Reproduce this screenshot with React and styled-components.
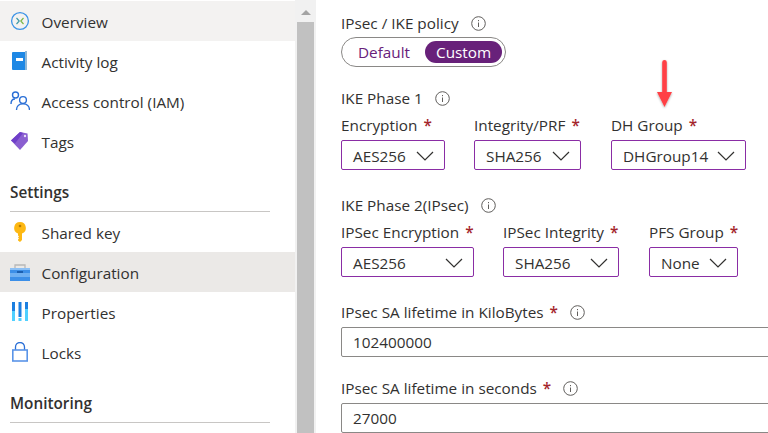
import React from 'react';
import styled, { createGlobalStyle } from 'styled-components';

const GlobalStyle = createGlobalStyle`
  html, body {
    margin: 0;
    padding: 0;
    background: #fff;
    overflow: hidden;
  }
  body {
    font-family: "Open Sans", "Noto Sans", sans-serif;
    color: #323130;
  }
`;

const OverviewIcon = () => (
  <svg width="20" height="20" viewBox="0 0 20 20" fill="none">
    <circle cx="10" cy="10" r="8.4" stroke="#3b93e6" strokeWidth="1.3" />
    <path d="M6.500 7 9.200 10 6.500 13" stroke="#3f9ba8" strokeWidth="1.2" />
    <path d="M13.500 7 10.800 10 13.500 13" stroke="#7ab648" strokeWidth="1.2" />
  </svg>
);

const LogIcon = () => (
  <svg width="16" height="20" viewBox="0 0 16 20">
    <rect x="0" y="1" width="15" height="18" rx="1" fill="#1e88e5" />
    <rect x="13" y="0" width="2" height="19" fill="#8fb8d8" />
    <rect x="4" y="7" width="7" height="3" fill="#fff" />
  </svg>
);

const AccessIcon = () => (
  <svg width="20" height="20" viewBox="0 0 20 20" fill="none" stroke="#2a6fd6" strokeWidth="1.4">
    <circle cx="5.500" cy="4" r="3" />
    <circle cx="13" cy="9" r="3.400" />
    <path d="M1 13c0-3 1.500-5 4-5" />
    <path d="M6.500 19c0-3.600 2.600-6.200 6.500-6.200s6.500 2.600 6.500 6.200" />
  </svg>
);

const TagIcon = () => (
  <svg width="18" height="20" viewBox="0 0 18 20">
    <path d="M0 9.500 9 1l7.500 1.500L17 10l-8 9z" fill="#8a5fd0" />
    <path d="M0 9.500 9 1l3 1-8 10.500z" fill="#6f3fc9" />
    <circle cx="14" cy="5" r="1.200" fill="#e8dff7" />
  </svg>
);

const KeyIcon = () => (
  <svg width="14" height="20" viewBox="0 0 14 20">
    <path d="M7 0a6 6 0 0 1 2 11.600V18l-2 2-2-1.500v-1l1-1-1-1 1-1-1-1v-1.900A6 6 0 0 1 7 0z" fill="#fdb813" />
    <circle cx="7" cy="4" r="1.300" fill="#b87b00" />
  </svg>
);

const ConfigIcon = () => (
  <svg width="20" height="17" viewBox="0 0 20 17">
    <path d="M5 4V1h10v3" fill="none" stroke="#b8b8b8" strokeWidth="1.300" />
    <rect x="0" y="4" width="20" height="13" fill="#3c8fe8" />
    <rect x="0" y="4" width="20" height="2" fill="#8cc0f5" />
    <rect x="0" y="9" width="20" height="4" fill="#6fb0f2" />
    <rect x="7" y="7" width="6" height="2" fill="#1b5fb0" />
  </svg>
);

const PropertiesIcon = () => (
  <svg width="16" height="20" viewBox="0 0 16 20">
    <rect x="0" y="0" width="3" height="9" fill="#1c7fe0" />
    <rect x="0" y="9" width="3" height="10" fill="#50d0ff" />
    <rect x="6.500" y="0" width="3" height="15" fill="#1c7fe0" />
    <rect x="6.500" y="16" width="3" height="3" fill="#50d0ff" />
    <rect x="13" y="0" width="3" height="7" fill="#1c7fe0" />
    <rect x="13" y="7" width="3" height="12" fill="#50d0ff" />
  </svg>
);

const LockIcon = () => (
  <svg width="16" height="20" viewBox="0 0 16 20" fill="none">
    <path d="M3.500 8V5a4.500 4.500 0 0 1 9 0v3" stroke="#2a6fd6" strokeWidth="1.300" />
    <rect x="0.800" y="8" width="14.400" height="11" stroke="#5a94e8" strokeWidth="1.600" fill="#fff" />
  </svg>
);

const InfoIcon = () => (
  <svg width="15" height="15" viewBox="0 0 15 15" fill="none">
    <circle cx="7.500" cy="7.500" r="6.800" stroke="#605e5c" />
    <path d="M7.500 6.500v4.500" stroke="#605e5c" />
    <path d="M7.500 4v1.200" stroke="#605e5c" />
  </svg>
);

const Chevron = () => (
  <svg width="18" height="10" viewBox="0 0 18 10" fill="none">
    <path d="M1 1l8 8 8-8" stroke="#323130" strokeWidth="1.200" />
  </svg>
);

const ArrowMark = () => (
  <svg width="24" height="54" viewBox="0 0 24 54" fill="none">
    <defs>
      <filter id="soft" x="-30%" y="-10%" width="160%" height="130%">
        <feDropShadow dx="0" dy="1" stdDeviation="1" floodColor="#000" floodOpacity="0.35" />
      </filter>
    </defs>
    <g filter="url(#soft)">
      <path d="M9.200 4.200a2.300 2.300 0 0 1 4.600 0V34h-4.600z" fill="#ff4045" />
      <path d="M4 34h15l-7.500 15z" fill="#ff4045" />
    </g>
  </svg>
);

const navTop = [
  { label: 'Overview', icon: <OverviewIcon />, tone: 'light' },
  { label: 'Activity log', icon: <LogIcon /> },
  { label: 'Access control (IAM)', icon: <AccessIcon /> },
  { label: 'Tags', icon: <TagIcon /> },
];

const navSettings = [
  { label: 'Shared key', icon: <KeyIcon /> },
  { label: 'Configuration', icon: <ConfigIcon />, tone: 'dark' },
  { label: 'Properties', icon: <PropertiesIcon /> },
  { label: 'Locks', icon: <LockIcon /> },
];

const NavList = ({ items }) =>
  items.map((item) => (
    <NavItem key={item.label} $tone={item.tone}>
      <IconSlot>{item.icon}</IconSlot>
      <NavLabel>{item.label}</NavLabel>
    </NavItem>
  ));

const SelectField = ({ label, value, width }) => (
  <Field>
    <FieldLabel>
      {label} <Required>*</Required>
    </FieldLabel>
    <Select $width={width}>
      {value}
      <Chevron />
    </Select>
  </Field>
);

const App = () => {
  return (
    <>
      <GlobalStyle />
      <Page>
        <Sidebar>
          <NavList items={navTop} />
          <SectionHeader>Settings</SectionHeader>
          <NavList items={navSettings} />
          <SectionHeader>Monitoring</SectionHeader>
        </Sidebar>
        <Scrollbar>
          <ScrollArrow />
          <ScrollThumb />
        </Scrollbar>
        <Form>
          <HeadingRow>
            IPsec / IKE policy
            <InfoIcon />
          </HeadingRow>
          <Toggle>
            <ToggleOption>Default</ToggleOption>
            <ToggleOption $active>Custom</ToggleOption>
          </Toggle>

          <HeadingRow $top={20}>
            IKE Phase 1
            <InfoIcon />
          </HeadingRow>
          <SelectRow>
            <SelectField label="Encryption" value="AES256" width={104} />
            <SelectField label="Integrity/PRF" value="SHA256" width={107} />
            <DhField>
              <Arrow>
                <ArrowMark />
              </Arrow>
              <SelectField label="DH Group" value="DHGroup14" width={135} />
            </DhField>
          </SelectRow>

          <HeadingRow $top={24}>
            IKE Phase 2(IPsec)
            <InfoIcon />
          </HeadingRow>
          <SelectRow>
            <SelectField label="IPSec Encryption" value="AES256" width={133} />
            <SelectField label="IPSec Integrity" value="SHA256" width={116} />
            <SelectField label="PFS Group" value="None" width={89} />
          </SelectRow>

          <HeadingRow $top={24}>
            <span>
              IPsec SA lifetime in KiloBytes <Required>*</Required>
            </span>
            <InfoIcon />
          </HeadingRow>
          <TextBox>102400000</TextBox>

          <HeadingRow $top={20}>
            <span>
              IPsec SA lifetime in seconds <Required>*</Required>
            </span>
            <InfoIcon />
          </HeadingRow>
          <TextBox>27000</TextBox>
        </Form>
      </Page>
    </>
  );
};

const Page = styled.div`
  display: flex;
  width: 768px;
  height: 433px;
  overflow: hidden;
  font-size: 15.3px;
`;

const Sidebar = styled.nav`
  flex: 0 0 295px;
  padding-top: 1px;
`;

const NavItem = styled.div`
  display: flex;
  align-items: center;
  height: 40px;
  background: ${(p) =>
    p.$tone === 'light' ? '#f3f2f1' : p.$tone === 'dark' ? '#ebe9e7' : 'transparent'};
`;

const NavLabel = styled.span`
  padding-top: 2px;
`;

const IconSlot = styled.span`
  display: flex;
  align-items: center;
  justify-content: center;
  width: 20px;
  margin: 0 11.5px 0 10px;
`;

const SectionHeader = styled.div`
  display: flex;
  align-items: flex-end;
  box-sizing: border-box;
  height: 51px;
  margin: 0 25px 0 10px;
  padding-bottom: 9px;
  border-bottom: 1px solid #c8c6c4;
  font-weight: 600;
`;

const Scrollbar = styled.div`
  flex: 0 0 21px;
  display: flex;
  flex-direction: column;
  align-items: center;
  box-sizing: border-box;
  padding: 0 2px;
  background: #f1f1f1;
`;

const ScrollArrow = styled.div`
  flex: none;
  width: 0;
  height: 0;
  margin: 10px 0 7px;
  border-left: 5px solid transparent;
  border-right: 5px solid transparent;
  border-bottom: 5px solid #a3a3a3;
`;

const ScrollThumb = styled.div`
  flex: 1;
  width: 100%;
  background: #c1c1c1;
`;

const Form = styled.main`
  flex: 1;
  min-width: 0;
  padding: 12px 0 0 25px;
`;

const HeadingRow = styled.div`
  display: flex;
  align-items: center;
  gap: 12px;
  height: 22px;
  margin-top: ${(p) => p.$top || 0}px;
`;

const Toggle = styled.div`
  display: inline-flex;
  align-items: center;
  gap: 15px;
  height: 28px;
  margin-top: 3px;
  padding: 0 3px 0 16px;
  border: 1px solid #8a8886;
  border-radius: 15px;
`;

const ToggleOption = styled.span`
  display: flex;
  align-items: center;
  height: 22px;
  padding: ${(p) => (p.$active ? '0 11px' : '0')};
  border-radius: 11px;
  background: ${(p) => (p.$active ? '#68217a' : 'transparent')};
  color: ${(p) => (p.$active ? '#fff' : '#68217a')};
`;

const SelectRow = styled.div`
  display: flex;
  gap: 29px;
  margin-top: 5px;

  & > :last-child {
    margin-left: 1px;
  }
`;

const Field = styled.div`
  display: flex;
  flex-direction: column;
  gap: 4px;
`;

const DhField = styled.div`
  position: relative;
`;

const Arrow = styled.div`
  position: absolute;
  top: -56px;
  left: 42px;
`;

const FieldLabel = styled.div`
  height: 22px;
  line-height: 22px;
`;

const Required = styled.span`
  margin-left: 2px;
  color: #a4262c;
  font-weight: 600;
`;

const Select = styled.div`
  display: flex;
  align-items: center;
  justify-content: space-between;
  box-sizing: border-box;
  width: ${(p) => p.$width}px;
  height: 30px;
  padding: 1px 10px 0 11px;
  border: 1px solid #8a2da5;
  border-radius: 2px;
`;

const TextBox = styled.div`
  display: flex;
  align-items: center;
  box-sizing: border-box;
  height: 30px;
  margin-top: 4px;
  margin-right: -8px;
  padding-left: 11px;
  border: 1px solid #8a8886;
  border-radius: 2px;
`;

export default App;
